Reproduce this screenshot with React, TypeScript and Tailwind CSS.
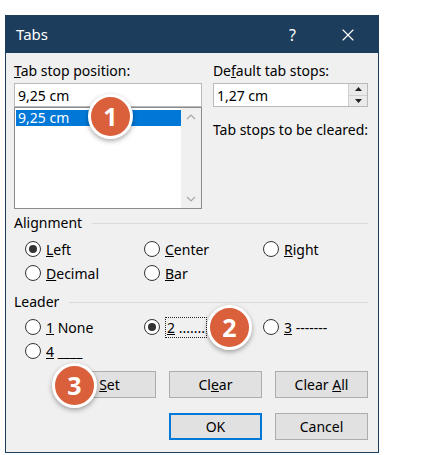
import { X } from 'lucide-react'

const font = { fontFamily: '"Noto Sans", "Open Sans", sans-serif' }

function Radio({ checked, children }: { checked?: boolean; children: React.ReactNode }) {
  return (
    <div className="flex items-center h-[24px]">
      <span className="w-[16px] h-[16px] rounded-full border border-[#333] bg-white flex items-center justify-center">
        {checked && <span className="w-[8px] h-[8px] rounded-full bg-[#333]" />}
      </span>
      <span className="ml-[5px]">{children}</span>
    </div>
  )
}

function GroupLabel({ text }: { text: string }) {
  return (
    <div className="flex items-center h-[16px] leading-[16px]">
      <span>{text}</span>
      <div className="flex-1 h-px bg-[#dadada] ml-[10px]" />
    </div>
  )
}

function Button({ children, primary }: { children: React.ReactNode; primary?: boolean }) {
  return (
    <button
      className={
        primary
          ? 'w-[93px] h-[27px] bg-[#e1e1e1] border-2 border-[#0078d7] text-black'
          : 'w-[93px] h-[27px] bg-[#e1e1e1] border border-[#adadad] text-black'
      }
    >
      {children}
    </button>
  )
}

function Badge({ n, className }: { n: number; className: string }) {
  return (
    <div
      className={
        'absolute w-[45px] h-[45px] rounded-full bg-[#d9603b] border-[3px] border-white shadow-[0_2px_5px_rgba(0,0,0,0.35)] flex items-center justify-center text-white font-bold text-[25px] ' +
        className
      }
      style={{ fontFamily: '"Open Sans", "Noto Sans", sans-serif' }}
    >
      {n}
    </div>
  )
}

export default function App() {
  return (
    <div className="relative min-h-[455px] bg-white pt-[15px] pl-[5px] text-[14px] text-black" style={font}>
      <div className="w-[374px] h-[438px] border border-[#1d3d5c] bg-[#f0f0f0] flex flex-col">
        {/* title bar */}
        <div className="h-[37px] bg-[#1d3d5c] flex items-center text-white shrink-0">
          <span className="ml-[10px] text-[15px]">Tabs</span>
          <span className="ml-auto text-[16px] mr-[42px]">?</span>
          <X size={20} strokeWidth={1.4} className="mr-[20px]" />
        </div>

        <div className="pl-[8px] pr-[10px]">
          <div className="flex">
            <div className="w-[190px]">
              <div className="mt-[10px] h-[16px] leading-[16px]">
                <u>T</u>ab stop position:
              </div>
              <div className="mt-[4px] h-[24px] bg-white border border-[#b9b9b9] flex items-center pl-[3px]">
                9,25 cm
              </div>
              <div className="h-[102px] bg-white border border-[#8c8c8c] flex">
                <div className="flex-1 pt-[2px] pl-[1px]">
                  <div className="h-[16px] bg-[#0078d7] text-white leading-[16px] pl-[2px]">9,25 cm</div>
                </div>
                <div className="w-[20px] bg-[#f0f0f0] flex flex-col items-center justify-between py-[6px] text-[#a8a8a8]">
                  <svg width="10" height="6" viewBox="0 0 10 6"><path d="M1 5 L5 1 L9 5" fill="none" stroke="currentColor" strokeWidth="1.2" /></svg>
                  <svg width="10" height="6" viewBox="0 0 10 6"><path d="M1 1 L5 5 L9 1" fill="none" stroke="currentColor" strokeWidth="1.2" /></svg>
                </div>
              </div>
            </div>

            <div className="ml-[11px] flex-1">
              <div className="mt-[10px] h-[16px] leading-[16px]">
                De<u>f</u>ault tab stops:
              </div>
              <div className="mt-[4px] h-[24px] bg-white border border-[#b9b9b9] flex items-center pl-[3px]">
                <span className="flex-1">1,27 cm</span>
                <div className="w-[19px] h-full flex flex-col border-l border-[#cfcfcf] bg-[#eaeaea]">
                  <div className="flex-1 flex items-center justify-center border-b border-[#cfcfcf]">
                    <svg width="7" height="4" viewBox="0 0 7 4"><path d="M0 4 L3.5 0 L7 4 Z" fill="#222" /></svg>
                  </div>
                  <div className="flex-1 flex items-center justify-center">
                    <svg width="7" height="4" viewBox="0 0 7 4"><path d="M0 0 L3.5 4 L7 0 Z" fill="#222" /></svg>
                  </div>
                </div>
              </div>
              <div className="mt-[15px] leading-[16px] whitespace-nowrap">Tab stops to be cleared:</div>
            </div>
          </div>

          {/* alignment */}
          <div className="mt-[6px]">
            <GroupLabel text="Alignment" />
            <div className="mt-[6px] pl-[11px] grid grid-cols-[119px_119px_1fr]">
              <Radio checked><u>L</u>eft</Radio>
              <Radio><u>C</u>enter</Radio>
              <Radio><u>R</u>ight</Radio>
              <Radio><u>D</u>ecimal</Radio>
              <Radio><u>B</u>ar</Radio>
            </div>
          </div>

          {/* leader */}
          <div className="mt-[9px]">
            <GroupLabel text="Leader" />
            <div className="mt-[5px] pl-[11px] grid grid-cols-[119px_119px_1fr]">
              <Radio><u>1</u> None</Radio>
              <Radio checked>
                <span className="border border-dotted border-[#222] px-[1px]"><u>2</u> .......</span>
              </Radio>
              <Radio><u>3</u> -------</Radio>
              <Radio><u>4</u> ____</Radio>
            </div>
          </div>

          <div className="mt-[8px] flex justify-end gap-[13px]">
            <Button><u>S</u>et</Button>
            <Button>Cl<u>e</u>ar</Button>
            <Button>Clear <u>A</u>ll</Button>
          </div>
          <div className="mt-[15px] flex justify-end gap-[13px]">
            <Button primary>OK</Button>
            <Button>Cancel</Button>
          </div>
        </div>
      </div>

      <Badge n={1} className="left-[88px] top-[94px]" />
      <Badge n={2} className="left-[207px] top-[305px]" />
      <Badge n={3} className="left-[52px] top-[363px]" />
    </div>
  )
}
